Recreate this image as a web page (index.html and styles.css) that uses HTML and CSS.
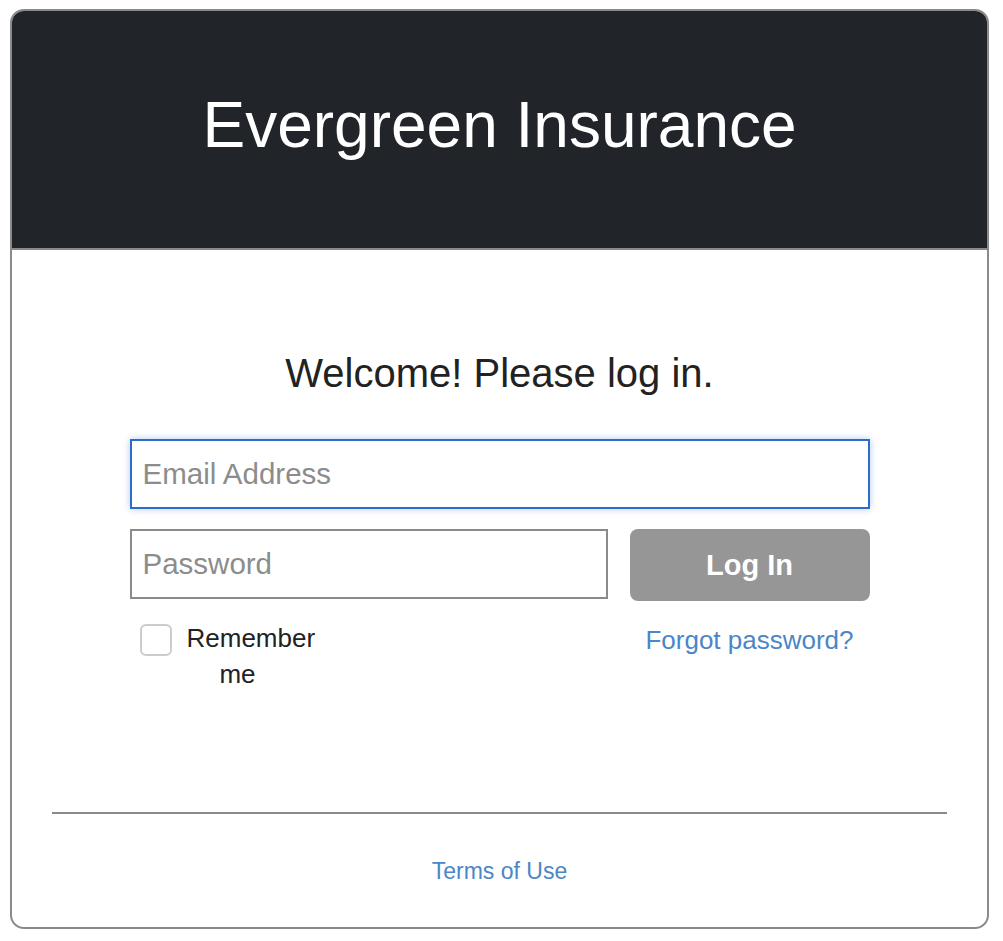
FILE: index.html
```html
<!DOCTYPE html>
<html lang="en">
<head>
    <meta charset="UTF-8">
    <meta name="viewport" content="width=device-width, initial-scale=1.0">
    <title>Evergreen Insurance</title>
    <link rel="stylesheet" href="styles.css">
</head>
<body>
    <div class="card">
        <div class="card-header">
            <h1>Evergreen Insurance</h1>
        </div>
        <div class="card-body">
            <h2>Welcome! Please log in.</h2>
            <form class="login-form" onsubmit="return false;">
                <input type="email" class="field field-focus" placeholder="Email Address">
                <div class="form-row">
                    <input type="password" class="field" placeholder="Password">
                    <button type="submit" class="login-btn">Log In</button>
                </div>
                <div class="form-row options">
                    <label class="remember">
                        <span class="check-box"></span>
                        <span class="remember-text">Remember me</span>
                    </label>
                    <a href="#" class="link forgot">Forgot password?</a>
                </div>
            </form>
        </div>
        <div class="card-footer">
            <a href="#" class="link">Terms of Use</a>
        </div>
    </div>
</body>
</html>
```

FILE: styles.css
```css
body {
    margin: 0;
    padding: 9px 14px 12px 10px;
    font-family: "Liberation Sans", Arial, sans-serif;
    background-color: #ffffff;
    color: #222222;
}
.card {
    border: 2px solid #8a8a8a;
    border-radius: 14px;
    overflow: hidden;
    background-color: white;
}
.card-header {
    background-color: #212429;
    box-sizing: border-box;
    height: 239px;
    padding-bottom: 9px;
    border-bottom: 2px solid #8a8a8a;
    display: flex;
    align-items: center;
    justify-content: center;
}
.card-header h1 {
    margin: 0;
    color: white;
    font-size: 64px;
    font-weight: normal;
    line-height: 1;
}
.card-body {
    padding: 100px 0 0;
    height: 462px;
    border-bottom: 2px solid #8a8a8a;
    margin: 0 40px;
}
.card-body h2 {
    margin: 0 0 43px;
    text-align: center;
    font-size: 40px;
    font-weight: normal;
    line-height: 46px;
}
.login-form {
    width: 740px;
    margin: 0 auto;
}
.field {
    display: block;
    box-sizing: border-box;
    width: 100%;
    height: 70px;
    padding: 0 11px;
    border: 2px solid #8a8a8a;
    font-family: inherit;
    font-size: 29.5px;
    color: #222222;
    outline: none;
}
.field::placeholder {
    color: #8c8c8c;
}
.field-focus {
    border-color: #2a6bcb;
    box-shadow: 0 0 7px rgba(42, 107, 203, 0.35);
}
.form-row {
    display: grid;
    grid-template-columns: 478px 240px;
    column-gap: 22px;
    margin-top: 20px;
    align-items: start;
}
.login-btn {
    height: 72px;
    border: none;
    border-radius: 8px;
    background-color: #969696;
    color: white;
    font-family: inherit;
    font-size: 29px;
    font-weight: bold;
    cursor: pointer;
}
.options {
    margin-top: 19px;
}
.remember {
    display: flex;
    align-items: flex-start;
    font-size: 26px;
    line-height: 36px;
    cursor: pointer;
}
.check-box {
    width: 28px;
    height: 28px;
    margin: 4px 0 0 10px;
    border: 2px solid #cccccc;
    border-radius: 6px;
    flex-shrink: 0;
}
.remember-text {
    width: 102px;
    margin-left: 15px;
    text-align: center;
}
.link {
    color: #4a86c8;
    text-decoration: none;
}
.forgot {
    padding-top: 2px;
    text-align: center;
    font-size: 26px;
    line-height: 36px;
}
.card-footer {
    height: 113px;
    padding-bottom: 2px;
    box-sizing: border-box;
    display: flex;
    align-items: flex-end;
    justify-content: center;
    font-size: 23px;
}
.card-footer .link {
    margin-bottom: 40px;
}
```
